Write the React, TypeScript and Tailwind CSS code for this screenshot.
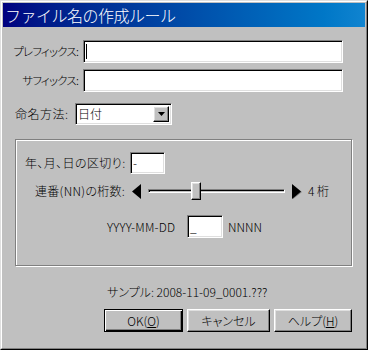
import React from "react";

const sunken =
  "bg-white border border-t-[#808080] border-l-[#808080] border-r-white border-b-white shadow-[inset_1px_1px_0_#000,inset_-1px_-1px_0_#dfdfdf]";
const raised =
  "bg-[#c0c0c0] border border-t-white border-l-white border-r-black border-b-black shadow-[inset_-1px_-1px_0_#808080,inset_1px_1px_0_#dfdfdf]";

function Caret() {
  return <div className="w-px h-[15px] bg-black ml-[2px]" />;
}

export default function App() {
  return (
    <div className="w-[368px] h-[350px] bg-[#c0c0c0] font-['Noto_Sans_CJK_JP',sans-serif] [font-feature-settings:'palt'] text-[12px] font-light text-black leading-none whitespace-nowrap">
      <div className="w-full h-full border border-t-[#dfdfdf] border-l-[#dfdfdf] border-r-black border-b-black">
        <div className="w-full h-full border border-t-white border-l-white border-r-[#808080] border-b-[#808080] p-px flex flex-col">
          {/* title */}
          <div className="h-[24px] bg-gradient-to-r from-[#000080] to-[#1084d0] flex items-center pl-[2px]">
            <span className="text-white text-[16px] font-light [font-feature-settings:normal] leading-none tracking-[-0.5px]">
              ファイル名の作成ルール
            </span>
          </div>

          <div className="pl-[12px] flex flex-col">
            {/* prefix */}
            <div className="flex items-center mt-[13px]">
              <div className="w-[66px] shrink-0 flex justify-end pr-[3px] text-[11.5px] tracking-[-0.8px]">プレフィックス:</div>
              <div className={`ml-[2px] w-[260px] h-[23px] flex items-center ${sunken}`}>
                <Caret />
              </div>
            </div>
            {/* suffix */}
            <div className="flex items-center mt-[6px]">
              <div className="w-[66px] shrink-0 flex justify-end pr-[3px] text-[11.5px] tracking-[-0.8px]">サフィックス:</div>
              <div className={`ml-[2px] w-[260px] h-[23px] ${sunken}`} />
            </div>
            {/* naming */}
            <div className="flex items-center mt-[11px]">
              <div className="w-[60px] shrink-0 tracking-[0.5px]">命名方法:</div>
              <div className={`w-[97px] h-[22px] flex items-center justify-between ${sunken} pr-[2px]`}>
                <span className="pl-[2px]">日付</span>
                <div className={`w-[16px] h-[16px] flex items-center justify-center ${raised}`}>
                  <svg width="7" height="4" viewBox="0 0 7 4">
                    <path d="M0 0h7L3.5 4z" fill="#000" />
                  </svg>
                </div>
              </div>
            </div>

            {/* group */}
            <div className="mt-[14px] w-[337px] h-[127px] border border-[#808080] shadow-[inset_1px_1px_0_#fff,1px_1px_0_#fff] flex flex-col">
              <div className="flex items-center mt-[12px] pl-[9px]">
                <div className="w-[105px] shrink-0 tracking-[0.4px]">年、月、日の区切り:</div>
                <div className={`w-[35px] h-[22px] flex items-center ${sunken}`}>
                  <span className="pl-[2px]">-</span>
                </div>
              </div>
              <div className="flex items-center mt-[8px] pl-[19px]">
                <div className="w-[91px] shrink-0 tracking-[0.3px]">連番(NN)の桁数:</div>
                <svg className="ml-[6px]" width="9" height="15" viewBox="0 0 9 15">
                  <path d="M9 0v15L0 7.5z" fill="#000" />
                </svg>
                <div className="relative ml-[7px] w-[137px] h-[18px] flex items-center">
                  <div className="w-full h-[4px] border border-t-[#808080] border-l-[#808080] border-r-white border-b-white shadow-[inset_1px_1px_0_#000]" />
                  <div className={`absolute left-[43px] top-0 w-[10px] h-[18px] ${raised}`} />
                </div>
                <svg className="ml-[7px]" width="10" height="15" viewBox="0 0 10 15">
                  <path d="M1 1v14L10 8z" fill="#808080" />
                  <path d="M0 0v15L9 7.5z" fill="#000" />
                </svg>
                <div className="ml-[6px]">4 桁</div>
              </div>
              <div className="flex items-center mt-[15px] pl-[91px]">
                <div className="w-[74px] shrink-0 tracking-[0.2px]">YYYY-MM-DD</div>
                <div className={`ml-[6px] w-[36px] h-[23px] flex items-center ${sunken}`}>
                  <span className="pl-[2px]">_</span>
                </div>
                <div className="ml-[5px]">NNNN</div>
              </div>
            </div>

            <div className="mt-[20px] pl-[92px] tracking-[0px]">サンプル: 2008-11-09_0001.???</div>

            <div className="flex justify-end mt-[11px] pr-[13px] gap-[4px]">
              <div className="w-[79px] h-[23px] bg-[#c0c0c0] border border-black shadow-[inset_1px_1px_0_#fff,inset_-1px_-1px_0_#000,inset_-2px_-2px_0_#808080] flex items-center justify-center">
                OK(<span className="underline">O</span>)
              </div>
              <div className={`w-[83px] h-[23px] flex items-center justify-center ${raised}`}>キャンセル</div>
              <div className={`w-[78px] h-[23px] flex items-center justify-center ${raised}`}>
                ヘルプ(<span className="underline">H</span>)
              </div>
            </div>
          </div>
        </div>
      </div>
    </div>
  );
}
